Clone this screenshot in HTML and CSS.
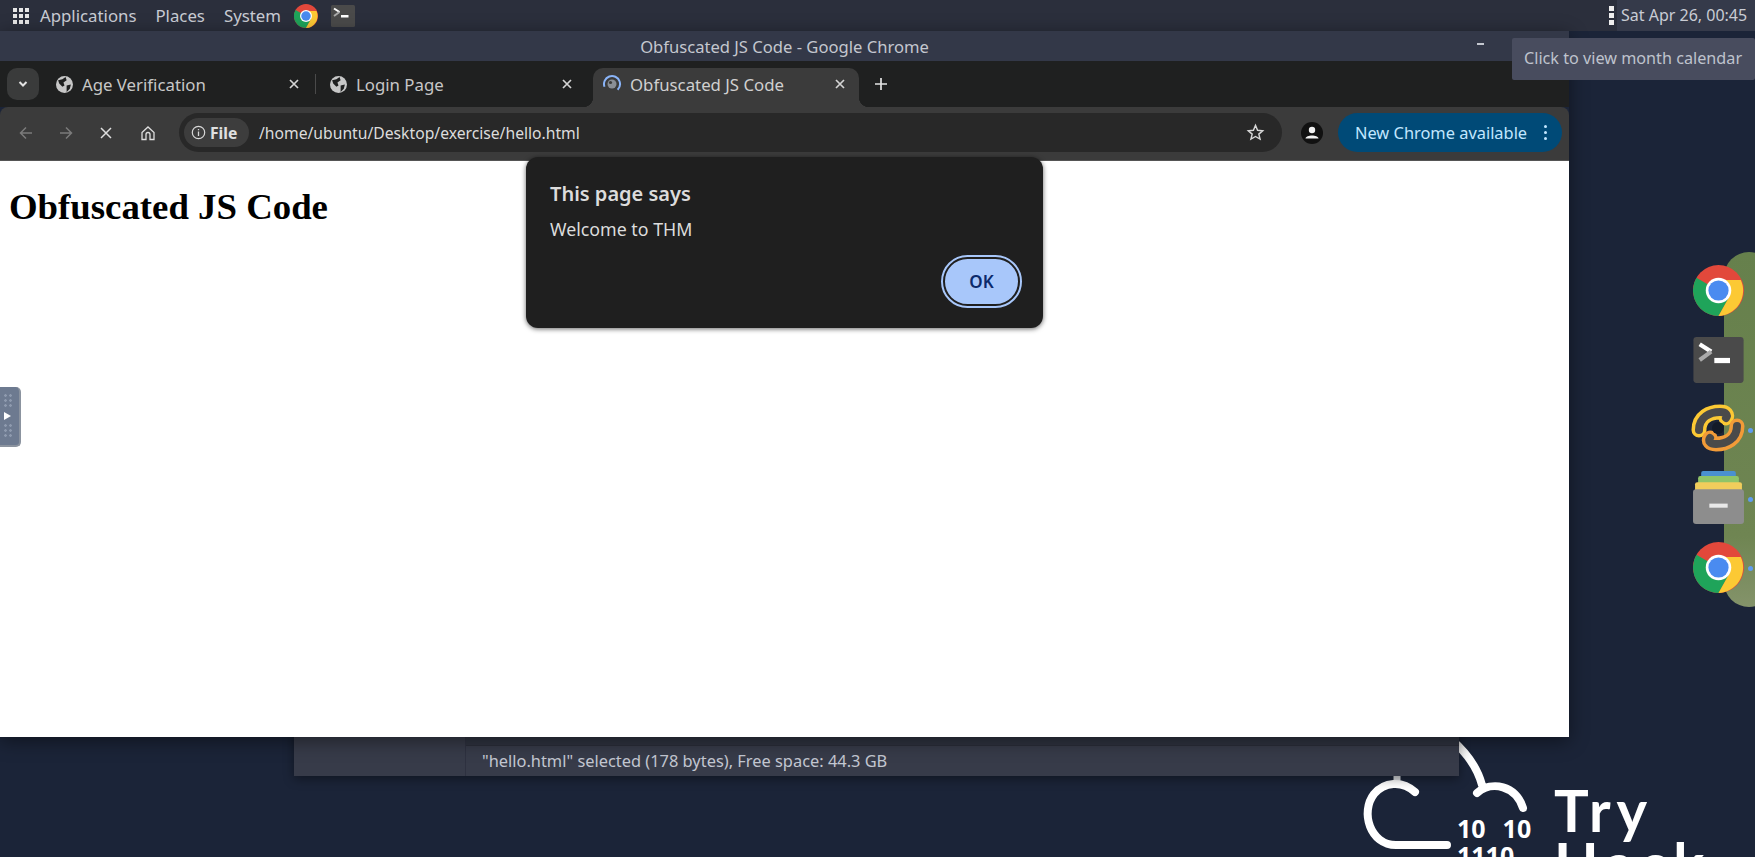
FILE: index.html
```html
<!DOCTYPE html>
<html>
<head>
    <title>Obfuscated JS Code - Google Chrome</title>
    <link rel="stylesheet" href="styles.css">
</head>
<body>
    <svg class="defs" width="0" height="0">
        <symbol id="chrome" viewBox="0 0 48 48">
            <circle cx="24" cy="24" r="24" fill="#e2483b"/>
            <path d="M24 24 L3.2 12 A24 24 0 0 0 24 48 L36 27z" fill="#1fa45a"/>
            <path d="M24 14 H45 A24 24 0 0 1 24 48 L34 30z" fill="#fcc934"/>
            <circle cx="24" cy="24" r="12" fill="#fff"/>
            <circle cx="24" cy="24" r="9.5" fill="#4a8bf0"/>
        </symbol>
        <symbol id="terminal" viewBox="0 0 48 44">
            <rect width="48" height="44" rx="3" fill="#4a4a4a"/>
            <path d="M6 7 L17 14" stroke="#fff" stroke-width="4" fill="none"/>
            <path d="M17 14 L6 22" stroke="#aaa" stroke-width="4" fill="none"/>
            <rect x="20" y="20" width="15" height="5" fill="#fff"/>
        </symbol>
        <symbol id="globe" viewBox="0 0 16 16">
            <circle cx="8" cy="8" r="8" fill="#c7c7c7"/>
            <path d="M2 4 L6 3 L9 1 L10 4 L7 6 L8 9 L6 10 L3 7z M10 9 L14 8 L13 12 L10 15z" fill="#1f2020"/>
        </symbol>
        <symbol id="close" viewBox="0 0 12 12">
            <path d="M2 2 L10 10 M10 2 L2 10" stroke="#d4d4d4" stroke-width="1.7" fill="none"/>
        </symbol>
    </svg>

    <div class="panel">
        <div class="panel-left">
            <div class="app-grid">
                <i></i><i></i><i></i><i></i><i></i><i></i><i></i><i></i><i></i>
            </div>
            <span class="menu-item">Applications</span>
            <span class="menu-item">Places</span>
            <span class="menu-item">System</span>
            <svg class="panel-chrome"><use href="#chrome"/></svg>
            <svg class="panel-term"><use href="#terminal"/></svg>
        </div>
        <div class="panel-right">
            <div class="kebab"><i></i><i></i><i></i></div>
            <div class="clock">Sat Apr 26, 00:45</div>
        </div>
    </div>

    <!-- wallpaper logo, the windows lie over it -->
    <div class="thm-logo">
        <svg class="thm-cloud" viewBox="0 0 170 100">
            <path d="M37 8 V18" stroke="#d8dade" stroke-width="7" fill="none"/>
            <path d="M55 28 C42 16 24 18 14 30 C0 48 10 81 36 81 H87" stroke="#fff" stroke-width="8" stroke-linecap="round" fill="none"/>
            <path d="M92 -24 C108 -10 118 6 122 21 M117 29 C132 16 156 22 163 44" stroke="#fff" stroke-width="8" stroke-linecap="round" fill="none"/>
        </svg>
        <div class="thm-digits">
            <span>10&nbsp;&nbsp;10</span>
            <span>1110</span>
        </div>
        <div class="thm-name">
            <span>Try</span>
            <span>Hack</span>
        </div>
    </div>

    <!-- file manager behind chrome, only the status bar shows -->
    <div class="files-window">
        <div class="files-side"></div>
        <div class="files-main">
            <div class="files-pane"></div>
            <div class="files-status">"hello.html" selected (178 bytes), Free space: 44.3 GB</div>
        </div>
    </div>

    <div class="chrome-window">
        <div class="titlebar">
            <span>Obfuscated JS Code - Google Chrome</span>
            <div class="win-min"></div>
        </div>
        <div class="tabstrip">
            <div class="tab-search">
                <svg width="12" height="12" viewBox="0 0 12 12"><path d="M2.5 4 L6 7.5 L9.5 4" stroke="#e3e3e3" stroke-width="2" fill="none"/></svg>
            </div>
            <div class="tab tab-one">
                <svg class="favicon"><use href="#globe"/></svg>
                <span class="tab-title">Age Verification</span>
                <svg class="tab-close"><use href="#close"/></svg>
            </div>
            <div class="tab-sep"></div>
            <div class="tab tab-two">
                <svg class="favicon"><use href="#globe"/></svg>
                <span class="tab-title">Login Page</span>
                <svg class="tab-close"><use href="#close"/></svg>
            </div>
            <div class="tab tab-active">
                <svg class="spinner" viewBox="0 0 20 20">
                    <circle cx="10" cy="10" r="8" stroke="#8ab4f8" stroke-width="2" fill="none" stroke-dasharray="34 16" transform="rotate(-200 10 10)"/>
                    <circle cx="10" cy="10" r="4.5" fill="#8a8f96"/>
                    <circle cx="8.5" cy="8.5" r="1.6" fill="#3b3b3b"/>
                </svg>
                <span class="tab-title">Obfuscated JS Code</span>
                <svg class="tab-close"><use href="#close"/></svg>
            </div>
            <svg class="new-tab" width="14" height="14" viewBox="0 0 14 14"><path d="M7 1 V13 M1 7 H13" stroke="#e3e3e3" stroke-width="1.7"/></svg>
        </div>
        <div class="toolbar">
            <svg class="nav-btn" viewBox="0 0 16 16"><path d="M14 8 H2.5 M8 2.5 L2.5 8 L8 13.5" stroke="#7b7b7b" stroke-width="1.5" fill="none"/></svg>
            <svg class="nav-btn" viewBox="0 0 16 16"><path d="M2 8 H13.5 M8 2.5 L13.5 8 L8 13.5" stroke="#7b7b7b" stroke-width="1.5" fill="none"/></svg>
            <svg class="nav-btn" viewBox="0 0 16 16"><path d="M3 3 L13 13 M13 3 L3 13" stroke="#dedede" stroke-width="1.5" fill="none"/></svg>
            <svg class="nav-btn" viewBox="0 0 16 16"><path d="M2 7.5 L8 2 L14 7.5 V14.5 H10 V9.5 A2 2 0 0 0 6 9.5 V14.5 H2z" stroke="#dedede" stroke-width="1.3" fill="none"/></svg>
            <div class="omnibox">
                <div class="file-chip">
                    <svg width="15" height="15" viewBox="0 0 15 15"><circle cx="7.5" cy="7.5" r="6.2" stroke="#d8d8d8" stroke-width="1.2" fill="none"/><path d="M7.5 6.5 V11 M7.5 4 V5.2" stroke="#d8d8d8" stroke-width="1.3"/></svg>
                    <span>File</span>
                </div>
                <span class="url">/home/ubuntu/Desktop/exercise/hello.html</span>
                <svg class="star" width="19" height="19" viewBox="0 0 20 20"><path d="M10 2.5 L12.2 7.6 L17.6 8.1 L13.5 11.7 L14.8 17 L10 14.2 L5.2 17 L6.5 11.7 L2.4 8.1 L7.8 7.6z" stroke="#d8d8d8" stroke-width="1.5" fill="none"/></svg>
            </div>
            <svg class="avatar" viewBox="0 0 22 22"><circle cx="11" cy="11" r="11" fill="#111"/><circle cx="11" cy="8" r="3.2" fill="#f2f2f2"/><path d="M4.5 16.5 C5 12.5 17 12.5 17.5 16.5z" fill="#f2f2f2"/></svg>
            <div class="update-pill">
                <span>New Chrome available</span>
                <div class="pill-dots"><i></i><i></i><i></i></div>
            </div>
        </div>
        <div class="page">
            <h1>Obfuscated JS Code</h1>
        </div>
    </div>

    <div class="alert">
        <div class="alert-title">This page says</div>
        <div class="alert-text">Welcome to THM</div>
        <div class="alert-actions">
            <button class="ok-btn">OK</button>
        </div>
    </div>

    <div class="tooltip">Click to view month calendar</div>

    <div class="side-handle">
        <div class="handle-dots"></div>
        <div class="handle-arrow"></div>
        <div class="handle-dots"></div>
    </div>

    <div class="dock-bg"></div>
    <div class="dock">
        <svg class="dock-icon"><use href="#chrome"/></svg>
        <svg class="dock-icon dock-term"><use href="#terminal"/></svg>
        <svg class="dock-icon dock-sync" viewBox="0 0 56 50">
            <path d="M9 27 C9 14 20 9 30 9 C36 9 38 12 36 15" fill="none" stroke="#fcc934" stroke-width="15" stroke-linecap="round"/>
            <path d="M47 23 C47 36 36 41 26 41 C20 41 18 38 20 35" fill="none" stroke="#f29b38" stroke-width="15" stroke-linecap="round"/>
            <path d="M9 27 C9 14 20 9 30 9 C36 9 38 12 36 15" fill="none" stroke="#4a4a4a" stroke-width="8" stroke-linecap="round"/>
            <path d="M47 23 C47 36 36 41 26 41 C20 41 18 38 20 35" fill="none" stroke="#4a4a4a" stroke-width="8" stroke-linecap="round"/>
            <circle cx="28" cy="25" r="6" fill="#131a28"/>
        </svg>
        <svg class="dock-icon dock-files" viewBox="0 0 50 52">
            <rect x="8" y="0" width="34" height="8" rx="2" fill="#4a90d0"/>
            <rect x="5" y="5" width="40" height="9" rx="2" fill="#8fc468"/>
            <rect x="2" y="11" width="46" height="9" rx="2" fill="#f0cd5c"/>
            <rect y="18" width="50" height="34" rx="3" fill="#8d8d8d"/>
            <rect x="16" y="32" width="18" height="4" fill="#e8e8e8"/>
        </svg>
        <svg class="dock-icon dock-last"><use href="#chrome"/></svg>
        <div class="dock-dots"><i></i><i></i><i></i></div>
    </div>
</body>
</html>
```

FILE: styles.css
```css
html, body {
    margin: 0;
    height: 100%;
    overflow: hidden;
}
body {
    font-family: "Noto Sans", sans-serif;
    background-color: #1b2438;
    position: relative;
}
.defs {
    position: absolute;
}

/* top panel */
.panel {
    height: 31px;
    background-color: #2b2f3c;
    display: flex;
    justify-content: space-between;
    align-items: stretch;
    color: #c9ccd4;
    font-size: 16.8px;
}
.panel-left {
    display: flex;
    align-items: center;
    padding-left: 13px;
}
.app-grid {
    display: grid;
    grid-template-columns: repeat(3, 4px);
    gap: 2px;
    margin-right: 11px;
}
.app-grid i {
    width: 4px;
    height: 4px;
    background-color: #e6e6e6;
}
.menu-item {
    margin-right: 19px;
}
.panel-chrome {
    width: 24px;
    height: 24px;
    margin-left: -6px;
    margin-right: 13px;
}
.panel-term {
    width: 24px;
    height: 22px;
}
.panel-right {
    display: flex;
    align-items: stretch;
}
.kebab {
    display: flex;
    flex-direction: column;
    justify-content: center;
    gap: 2px;
    margin-right: 3px;
}
.kebab i {
    width: 5px;
    height: 5px;
    background-color: #eee;
}
.clock {
    background-color: #353a4a;
    padding-left: 4px;
    box-sizing: border-box;
    line-height: 31px;
    font-size: 16px;
    width: 138px;
    white-space: nowrap;
}

/* windows on the desktop */
.files-window {
    position: absolute;
    left: 294px;
    top: 700px;
    width: 1165px;
    height: 76px;
    display: flex;
    background-color: #373b49;
    box-shadow: 0 3px 10px rgba(0, 0, 0, 0.4);
}
.files-side {
    width: 171px;
    border-right: 1px solid #2e3140;
}
.files-main {
    flex: 1;
    display: flex;
    flex-direction: column;
}
.files-pane {
    flex: 1;
    background-color: #2f3340;
    border-bottom: 1px solid #2a2d39;
}
.files-status {
    height: 30px;
    line-height: 30px;
    padding-left: 16px;
    color: #c3c7d1;
    font-size: 16.4px;
    white-space: nowrap;
}
.chrome-window {
    position: absolute;
    left: 0;
    top: 31px;
    width: 1569px;
    height: 706px;
    display: flex;
    flex-direction: column;
    box-shadow: 0 4px 18px rgba(0, 0, 0, 0.45);
}
.titlebar {
    height: 30px;
    flex: none;
    background-color: #333848;
    color: #c4c7cf;
    font-size: 16.6px;
    display: flex;
    justify-content: center;
    align-items: center;
    position: relative;
}
.win-min {
    position: absolute;
    left: 1477px;
    top: 12px;
    width: 7px;
    height: 2px;
    background-color: #c4c7cf;
}
.tabstrip {
    height: 46px;
    flex: none;
    background-color: #1f2020;
    display: flex;
    align-items: flex-start;
    padding-left: 7px;
    color: #c7c7c7;
    font-size: 16.8px;
}
.tab-search {
    width: 32px;
    height: 32px;
    margin-top: 7px;
    border-radius: 10px;
    background-color: #3a3b3b;
    display: flex;
    align-items: center;
    justify-content: center;
    margin-right: 6px;
}
.tab {
    display: flex;
    align-items: center;
    height: 39px;
    margin-top: 7px;
    box-sizing: border-box;
    white-space: nowrap;
    padding-bottom: 7px;
}
.tab-one {
    width: 270px;
    padding-left: 11px;
    padding-right: 15px;
}
.tab-sep {
    width: 1px;
    height: 20px;
    margin-top: 13px;
    background-color: #4a4a4a;
}
.tab-two {
    width: 277px;
    padding-left: 14px;
    padding-right: 20px;
}
.tab-active {
    width: 266px;
    padding-left: 9px;
    padding-right: 13px;
    background-color: #3b3b3b;
    border-radius: 10px 10px 0 0;
    color: #d0d0d0;
    position: relative;
}
.tab-active::before,
.tab-active::after {
    content: "";
    position: absolute;
    bottom: 0;
    width: 10px;
    height: 10px;
}
.tab-active::before {
    left: -10px;
    background: radial-gradient(circle at 0 0, #1f2020 10px, #3b3b3b 10.5px);
}
.tab-active::after {
    right: -10px;
    background: radial-gradient(circle at 100% 0, #1f2020 10px, #3b3b3b 10.5px);
}
.favicon {
    width: 17px;
    height: 17px;
    margin-right: 9px;
    flex: none;
}
.spinner {
    width: 20px;
    height: 20px;
    margin-right: 8px;
    flex: none;
}
.tab-title {
    flex: 1;
}
.tab-close {
    width: 12px;
    height: 12px;
    flex: none;
}
.new-tab {
    margin-left: 15px;
    margin-top: 16px;
}
.toolbar {
    height: 54px;
    flex: none;
    box-sizing: border-box;
    background-color: #3b3b3b;
    border-bottom: 1px solid #555;
    border-radius: 8px 8px 0 0;
    display: flex;
    align-items: center;
    padding: 0 7px 2px 18px;
    color: #d8d8d8;
}
.nav-btn {
    width: 16px;
    height: 16px;
    margin-right: 24px;
    flex: none;
}
.nav-btn:nth-child(3) {
    margin-right: 26px;
}
.nav-btn:nth-child(4) {
    margin-right: 23px;
}
.omnibox {
    width: 1103px;
    height: 39px;
    background-color: #282828;
    border-radius: 20px;
    display: flex;
    align-items: center;
    padding-left: 5px;
    box-sizing: border-box;
    font-size: 15.7px;
}
.file-chip {
    display: flex;
    align-items: center;
    gap: 4px;
    height: 29px;
    width: 65px;
    box-sizing: border-box;
    padding-left: 7px;
    background-color: #3d3d3d;
    border-radius: 15px;
    font-weight: 700;
    color: #e0e0e0;
    margin-right: 10px;
}
.url {
    flex: 1;
    color: #dcdcdc;
}
.star {
    margin-right: 17px;
}
.avatar {
    width: 22px;
    height: 22px;
    margin-left: 19px;
    margin-right: 15px;
    flex: none;
}
.update-pill {
    width: 224px;
    height: 39px;
    box-sizing: border-box;
    border-radius: 20px;
    background-color: #004a77;
    color: #c2e7ff;
    font-size: 16.4px;
    display: flex;
    align-items: center;
    justify-content: space-between;
    padding: 0 15px 0 17px;
    white-space: nowrap;
}
.pill-dots {
    display: flex;
    flex-direction: column;
    gap: 3px;
}
.pill-dots i {
    width: 3px;
    height: 3px;
    border-radius: 50%;
    background-color: #c2e7ff;
}
.page {
    flex: 1;
    background-color: #fff;
    padding: 25px 9px;
}
.page h1 {
    margin: 0;
    font-family: "Liberation Serif", serif;
    font-size: 36.8px;
    line-height: 41px;
    color: #000;
}

/* alert dialog */
.alert {
    position: absolute;
    left: 526px;
    top: 157px;
    width: 517px;
    height: 171px;
    box-sizing: border-box;
    background-color: #1f1f1f;
    border-radius: 12px;
    box-shadow: 0 1px 5px rgba(0, 0, 0, 0.6);
    padding: 24px 24px 0;
    color: #dcdcdc;
}
.alert-title {
    font-size: 20px;
    font-weight: 600;
    line-height: 26px;
}
.alert-text {
    font-size: 17.8px;
    line-height: 24px;
    margin-top: 10px;
}
.alert-actions {
    display: flex;
    justify-content: flex-end;
    margin-top: 13px;
    margin-right: -3px;
}
.ok-btn {
    width: 77px;
    height: 49px;
    margin: 3px 2px 0 0;
    border: 2px solid #1f1f1f;
    outline: 2px solid #a8c7fa;
    border-radius: 25px;
    background-color: #a8c7fa;
    color: #0b2a6b;
    font-family: "Noto Sans", sans-serif;
    font-size: 17px;
    font-weight: 600;
}

.tooltip {
    position: absolute;
    left: 1512px;
    top: 38px;
    width: 243px;
    height: 42px;
    box-sizing: border-box;
    padding-left: 12px;
    line-height: 40px;
    background-color: #484c5e;
    color: #bfc3cd;
    font-size: 16.2px;
    white-space: nowrap;
    border-radius: 2px;
}

.side-handle {
    position: absolute;
    left: 0;
    top: 387px;
    width: 21px;
    height: 60px;
    box-sizing: border-box;
    border-radius: 0 5px 5px 0;
    background-color: #6d7a90;
    border-right: 2px solid #8b939f;
    border-bottom: 2px solid #8b939f;
    display: flex;
    flex-direction: column;
    align-items: center;
    justify-content: center;
    gap: 3px;
    padding-right: 4px;
}
.handle-dots {
    width: 10px;
    height: 16px;
    background-image: radial-gradient(circle, #8e9aae 1.2px, transparent 1.5px);
    background-size: 5px 5px;
}
.handle-arrow {
    width: 0;
    height: 0;
    border-left: 7px solid #fff;
    border-top: 4px solid transparent;
    border-bottom: 4px solid transparent;
}

/* dock on the right edge */
.dock-bg {
    position: absolute;
    left: 1724px;
    top: 252px;
    width: 50px;
    height: 355px;
    border-radius: 28px;
    background: linear-gradient(180deg, #66804c, #6f8552 80%, #84936a);
}
.dock {
    position: absolute;
    left: 1690px;
    top: 265px;
    width: 56px;
    display: flex;
    flex-direction: column;
    align-items: center;
}
.dock-icon {
    width: 51px;
    height: 51px;
    margin-bottom: 21px;
}
.dock-term {
    height: 46px;
    margin-bottom: 20px;
}
.dock-sync {
    width: 56px;
    height: 50px;
    margin-bottom: 18px;
}
.dock-files {
    height: 53px;
    margin-bottom: 18px;
}
.dock-dots {
    position: absolute;
    left: 58px;
    top: 163px;
    display: flex;
    flex-direction: column;
    gap: 64px;
}
.dock-dots i {
    display: block;
    width: 5px;
    height: 5px;
    border-radius: 50%;
    background-color: #5f9cf0;
}

/* tryhackme logo, cut off by the window bottom */
.thm-logo {
    position: absolute;
    left: 1360px;
    top: 0;
    width: 395px;
    height: 857px;
    overflow: hidden;
}
.thm-cloud {
    position: absolute;
    left: 0;
    top: 764px;
    width: 170px;
    height: 100px;
    overflow: visible;
}
.thm-digits {
    position: absolute;
    left: 97px;
    top: 815px;
    display: flex;
    flex-direction: column;
    color: #fff;
    font-weight: 700;
    font-size: 25px;
    line-height: 27px;
    word-spacing: 2px;
}
.thm-name {
    position: absolute;
    left: 194px;
    top: 783px;
    display: flex;
    flex-direction: column;
    color: #fff;
    font-family: "Lato", sans-serif;
    font-weight: 700;
    font-size: 58px;
    line-height: 53px;
    letter-spacing: 6px;
}
```
